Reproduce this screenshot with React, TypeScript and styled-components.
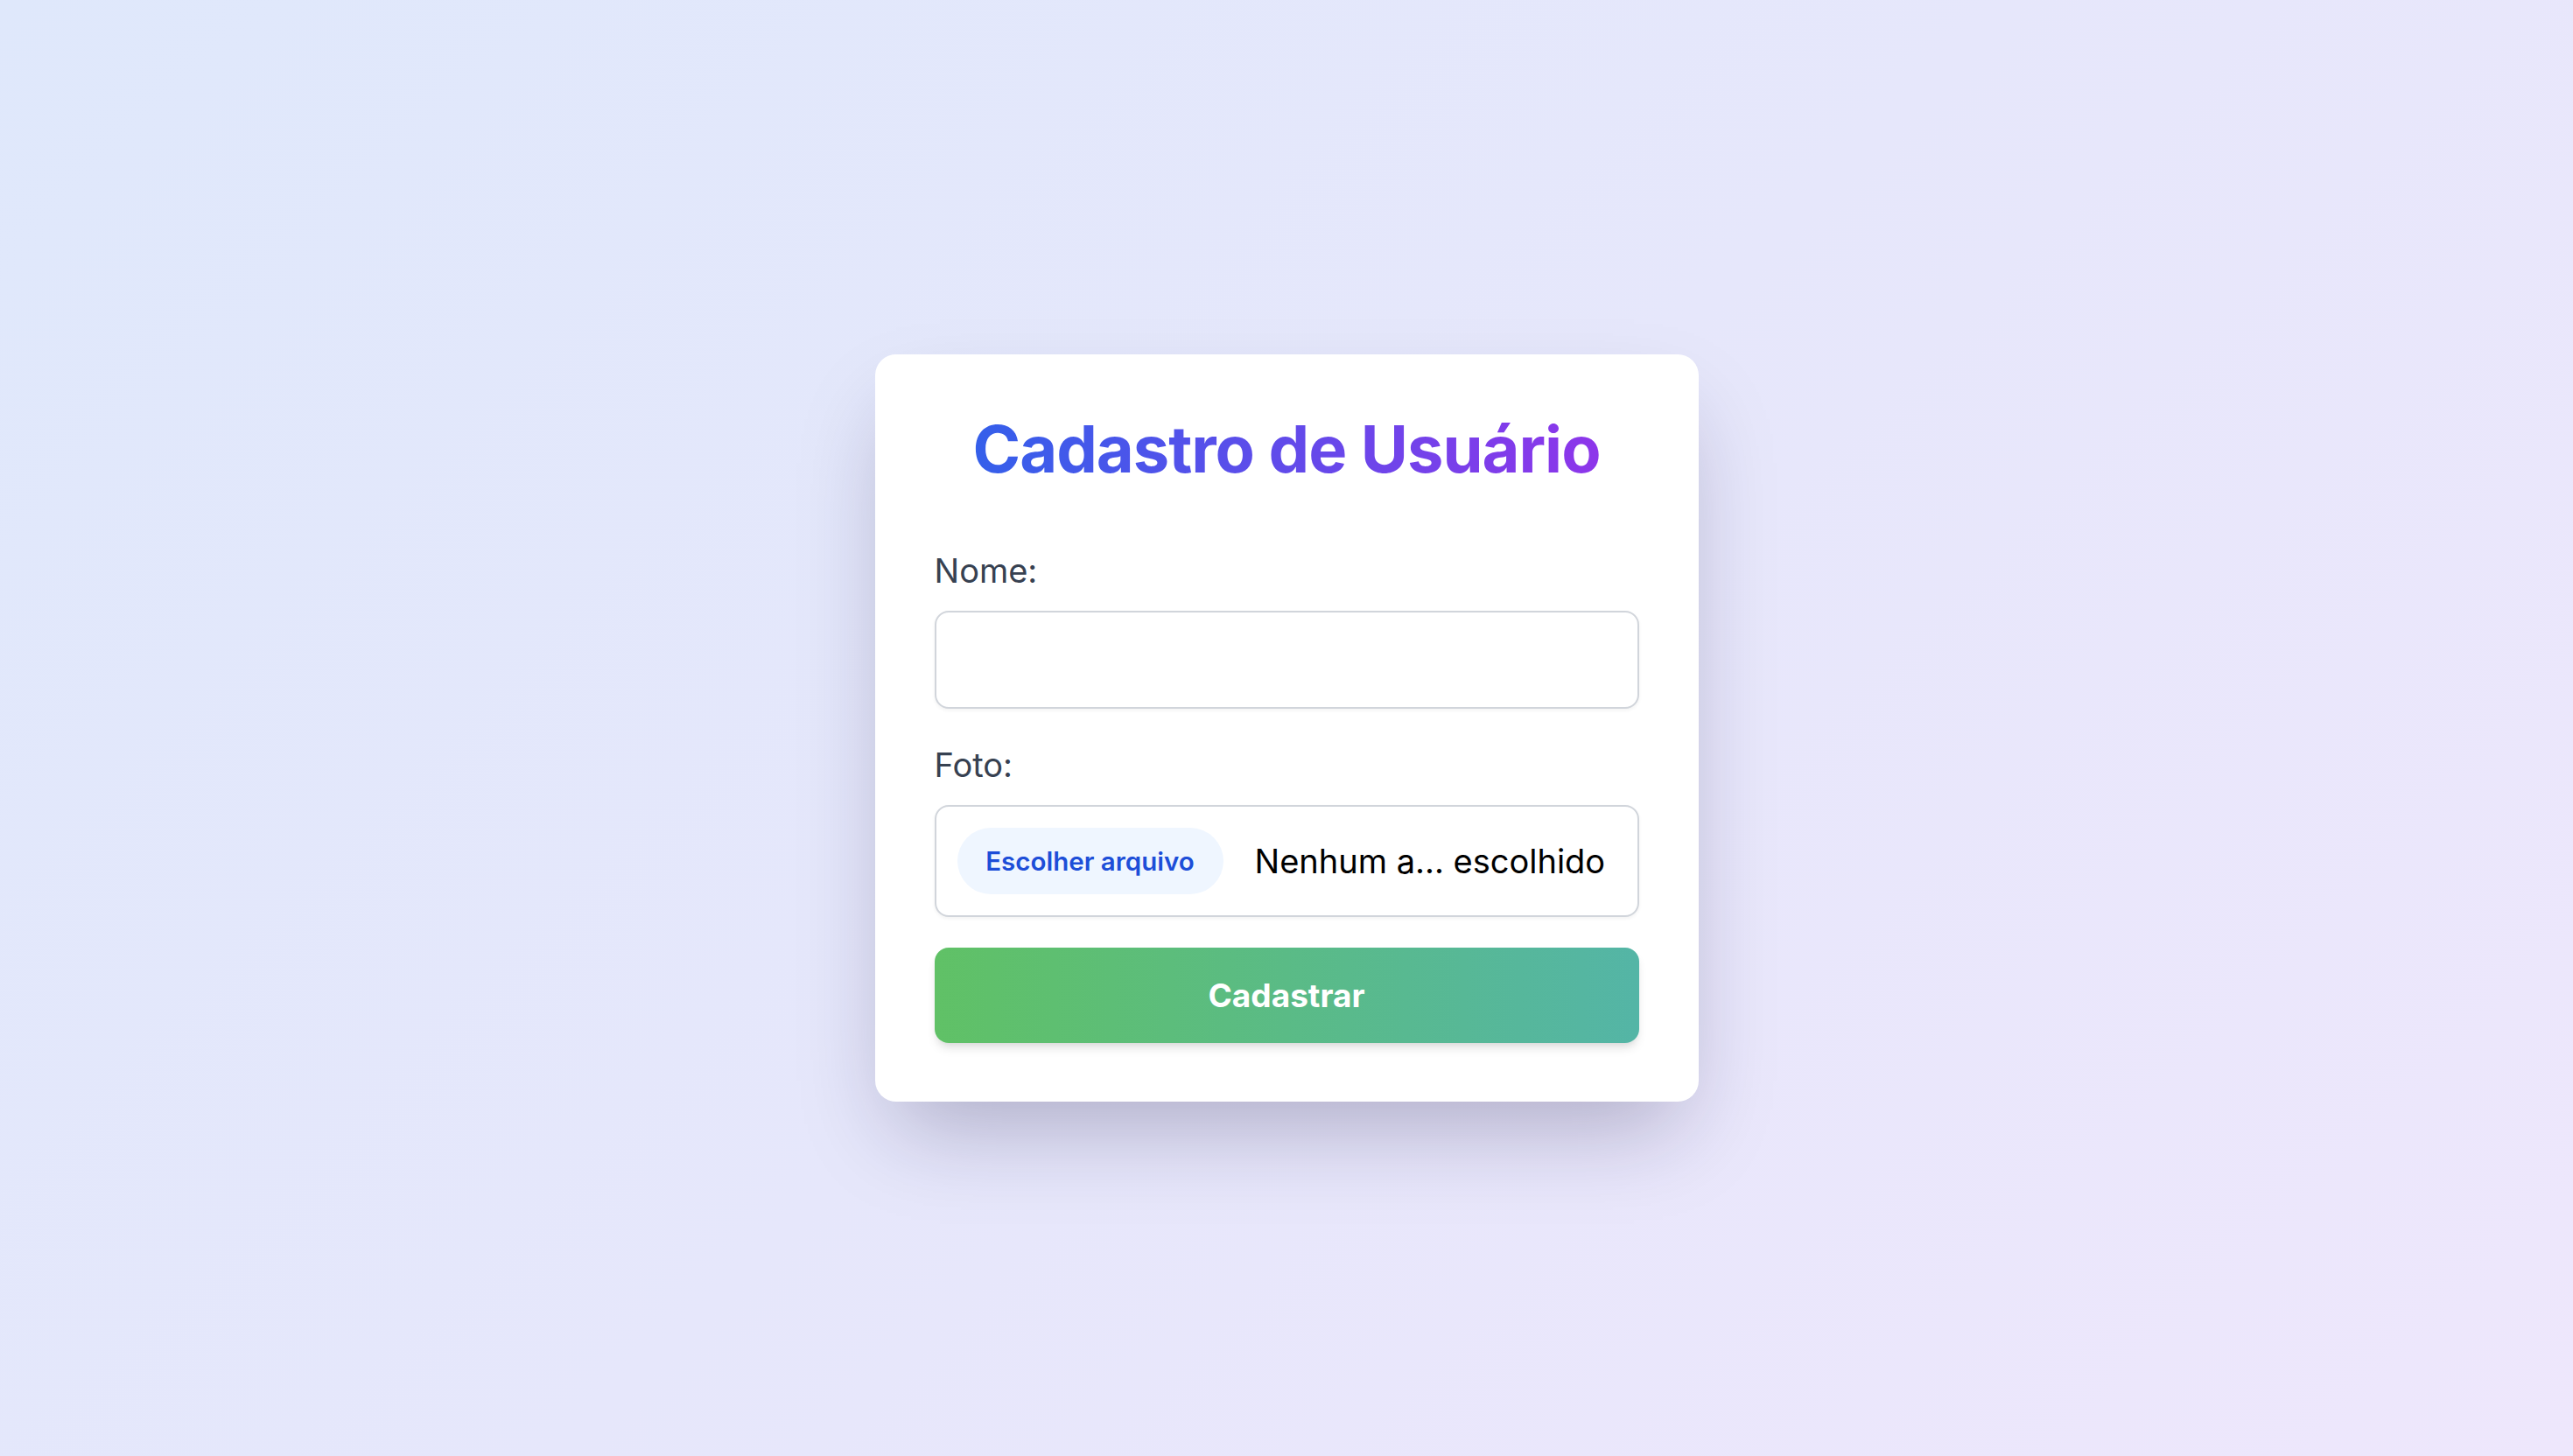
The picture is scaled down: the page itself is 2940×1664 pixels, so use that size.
import React from "react";
import styled, { createGlobalStyle } from "styled-components";

const GlobalStyle = createGlobalStyle`
  html, body {
    margin: 0;
    padding: 0;
  }
  body {
    font-family: Inter, "Noto Sans", "Liberation Sans", sans-serif;
    -webkit-font-smoothing: antialiased;
  }
  * { box-sizing: border-box; }
`;

const Page = styled.main`
  min-height: 100vh;
  display: flex;
  align-items: center;
  justify-content: center;
  background: linear-gradient(135deg, #dfe8fb 0%, #e6e7fb 50%, #eee7fc 100%);
`;

const Card = styled.section`
  width: 941px;
  padding: 68px 68px 67px;
  background: #ffffff;
  border-radius: 24px;
  box-shadow: 0 50px 100px -24px rgba(20, 16, 60, 0.28);
`;

const Title = styled.h1`
  margin: 0 0 71px;
  font-size: 74px;
  line-height: 80px;
  font-weight: 700;
  letter-spacing: -1px;
  text-align: center;
  background: linear-gradient(90deg, #2f62ea 0%, #9333ea 100%);
  -webkit-background-clip: text;
  background-clip: text;
  color: transparent;
`;

const Form = styled.form`
  display: flex;
  flex-direction: column;
`;

const Field = styled.div<{ $gap: number }>`
  display: flex;
  flex-direction: column;
  margin-bottom: ${(p) => p.$gap}px;
`;

const Label = styled.label`
  font-size: 38px;
  line-height: 56px;
  color: #374151;
  margin-bottom: 18px;
`;

const TextInput = styled.input`
  height: 112px;
  width: 100%;
  padding: 0 28px;
  font-family: inherit;
  font-size: 36px;
  border: 2px solid #d1d5db;
  border-radius: 16px;
  background: #fff;
  box-shadow: 0 2px 4px rgba(0, 0, 0, 0.05);
  outline: none;
`;

const FileBox = styled.label`
  height: 128px;
  display: flex;
  align-items: center;
  padding: 0 24px;
  border: 2px solid #d1d5db;
  border-radius: 16px;
  background: #fff;
  box-shadow: 0 2px 4px rgba(0, 0, 0, 0.05);
  cursor: pointer;
`;

const FileButton = styled.span`
  display: inline-flex;
  align-items: center;
  justify-content: center;
  height: 76px;
  width: 304px;
  border-radius: 999px;
  background: #eff6ff;
  color: #1d4ed8;
  font-size: 29.5px;
  font-weight: 600;
  flex-shrink: 0;
`;

const FileName = styled.span`
  margin-left: 36px;
  font-size: 38px;
  color: #000;
  white-space: nowrap;
  overflow: hidden;
`;

const SubmitButton = styled.button`
  height: 109px;
  width: 100%;
  border: none;
  border-radius: 16px;
  background: linear-gradient(90deg, #60c166 0%, #54b5a6 100%);
  color: #ffffff;
  font-family: inherit;
  font-size: 37px;
  font-weight: 700;
  box-shadow: 0 8px 12px -2px rgba(0, 0, 0, 0.1), 0 4px 8px -4px rgba(0, 0, 0, 0.1);
  cursor: pointer;
`;

export default function App() {
  return (
    <>
      <GlobalStyle />
      <Page>
        <Card>
          <Title>Cadastro de Usuário</Title>
          <Form onSubmit={(e) => e.preventDefault()}>
            <Field $gap={36}>
              <Label htmlFor="nome">Nome:</Label>
              <TextInput id="nome" type="text" />
            </Field>
            <Field $gap={35}>
              <Label htmlFor="foto">Foto:</Label>
              <FileBox>
                <FileButton>Escolher arquivo</FileButton>
                <FileName>Nenhum a... escolhido</FileName>
              </FileBox>
            </Field>
            <SubmitButton type="submit">Cadastrar</SubmitButton>
          </Form>
        </Card>
      </Page>
    </>
  );
}
